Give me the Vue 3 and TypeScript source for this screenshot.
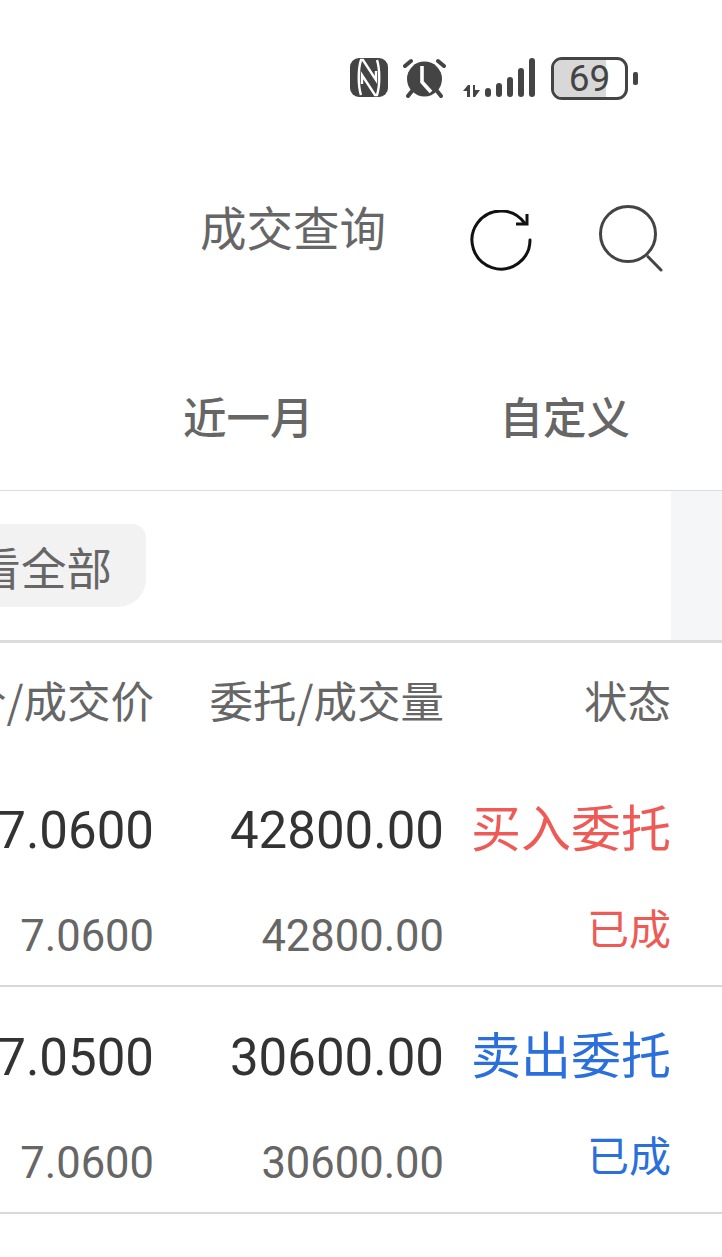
<script setup lang="ts">
interface Trade {
  price: string
  dealPrice: string
  amount: string
  dealAmount: string
  action: string
  state: string
  side: 'buy' | 'sell'
}

const trades: Trade[] = [
  { price: '7.0600', dealPrice: '7.0600', amount: '42800.00', dealAmount: '42800.00', action: '买入委托', state: '已成', side: 'buy' },
  { price: '7.0500', dealPrice: '7.0600', amount: '30600.00', dealAmount: '30600.00', action: '卖出委托', state: '已成', side: 'sell' },
]

const signalBars = [9, 14, 20, 29, 39]
</script>

<template>
  <div class="screen">
    <div class="status-bar">
      <svg class="nfc" width="38" height="39" viewBox="0 0 38 39" fill="none">
        <rect width="38" height="39" rx="9" fill="#444" />
        <path d="M11 37C8 28 8 11 11 2h2l13 20V13M27 2C30 11 30 28 27 37h-2L12 17v9" stroke="#fff" stroke-width="2.4" />
      </svg>
      <svg class="alarm" width="43" height="40" viewBox="0 0 43 40" fill="none">
        <path d="M2 8 8 3M41 8 35 3M9 33l-4 5M34 33l4 5" stroke="#444" stroke-width="4" stroke-linecap="round" />
        <circle cx="21.5" cy="21" r="17.5" fill="#444" />
        <path d="M19 8v16l9 10" stroke="#fff" stroke-width="3.6" />
      </svg>
      <div class="signal">
        <svg class="signal-mark" width="18" height="12" viewBox="0 0 18 12">
          <path d="M0 6 5 0h2v12H4V6zM10 0h2v5h5l-5 7h-2z" fill="#444" />
        </svg>
        <i v-for="h in signalBars" :key="h" :style="{ height: h + 'px' }"></i>
      </div>
      <div class="battery">
        <div class="battery-body">
          <div class="battery-fill"></div>
          <span>69</span>
        </div>
        <div class="battery-cap"></div>
      </div>
    </div>

    <div class="title-row">
      <span class="title">成交查询</span>
      <svg class="refresh" width="64" height="64" viewBox="0 0 64 64" fill="none" stroke="#111" stroke-width="3" stroke-linecap="round">
        <path d="M60 30A29 29 0 1 1 54.5 13" />
        <path d="M46 14h11V4" stroke-linecap="butt" />
      </svg>
      <svg class="search" width="66" height="68" viewBox="0 0 66 68" fill="none" stroke="#444" stroke-width="3" stroke-linecap="round">
        <circle cx="30" cy="30" r="27.5" />
        <path d="M50 52.7 63 66" />
      </svg>
    </div>

    <div class="tabs">
      <span class="tab-month">近一月</span>
      <span class="tab-custom">自定义</span>
    </div>

    <div class="filter-row">
      <div class="chip"><span>查看全部</span></div>
      <div class="side-shade"></div>
    </div>

    <div class="table-head">
      <div class="cell col-price">委托价/成交价</div>
      <div class="cell col-amount">委托/成交量</div>
      <div class="cell col-status">状态</div>
    </div>

    <div v-for="t in trades" :key="t.amount" class="trade">
      <div class="line line-top">
        <div class="cell col-price">{{ t.price }}</div>
        <div class="cell col-amount">{{ t.amount }}</div>
        <div class="cell col-status action" :class="t.side">{{ t.action }}</div>
      </div>
      <div class="line line-bottom">
        <div class="cell col-price">{{ t.dealPrice }}</div>
        <div class="cell col-amount">{{ t.dealAmount }}</div>
        <div class="cell col-status state" :class="t.side">{{ t.state }}</div>
      </div>
    </div>
  </div>
</template>

<style>
html,
body {
  margin: 0;
  background: #fff;
}
</style>

<style scoped>
.screen {
  width: 722px;
  height: 1257px;
  overflow: hidden;
  background: #fff;
  font-family: "Noto Sans CJK SC", "Noto Sans", sans-serif;
  color: #666;
}

.status-bar {
  height: 130px;
  box-sizing: border-box;
  padding: 57px 84px 0 0;
  display: flex;
  justify-content: flex-end;
  align-items: flex-start;
}

.nfc {
  margin: 1px 15px 0 0;
}

.alarm {
  margin: 1px 17px 0 0;
}

.signal {
  height: 40px;
  margin-right: 16px;
  display: flex;
  align-items: flex-end;
  gap: 5px;
}

.signal i {
  width: 6px;
  border-radius: 3px;
  background: #444;
}

.signal-mark {
  margin-right: -1px;
}

.battery {
  display: flex;
  align-items: center;
  gap: 5px;
}

.battery-body {
  position: relative;
  width: 77px;
  height: 43px;
  box-sizing: border-box;
  border: 3px solid #444;
  border-radius: 11px;
  overflow: hidden;
  text-align: center;
}

.battery-fill {
  position: absolute;
  left: 0;
  top: 0;
  bottom: 0;
  width: 73%;
  background: #d8d8d8;
}

.battery-body span {
  position: relative;
  font-family: Roboto, sans-serif;
  font-size: 37px;
  line-height: 38px;
  color: #444;
}

.battery-cap {
  width: 5px;
  height: 13px;
  border-radius: 2px;
  background: #444;
}

.title-row {
  height: 130px;
  display: flex;
  justify-content: flex-end;
  align-items: flex-start;
  padding-right: 58px;
}

.title {
  font-size: 46.5px;
  line-height: 60px;
  margin: 66px 84px 0 0;
  color: #666;
}

.refresh {
  margin: 80px 64px 0 0;
}

.search {
  margin-top: 74px;
}

.tabs {
  height: 231px;
  box-sizing: border-box;
  border-bottom: 1px solid #dcdcdc;
  display: flex;
  padding: 126px 0 0 183px;
  font-size: 43.5px;
  line-height: 60px;
  color: #666;
  font-weight: 500;
}

.tab-month {
  margin-right: 186px;
}

.filter-row {
  height: 149px;
  display: flex;
  justify-content: space-between;
  border-bottom: 3px solid #dcdcdc;
}

.chip {
  width: 146px;
  height: 83px;
  margin-top: 33px;
  display: flex;
  justify-content: flex-end;
  align-items: center;
  padding-right: 34px;
  box-sizing: border-box;
  border-radius: 0 14px 28px 0;
  background: #f2f2f2;
  font-size: 45.5px;
  white-space: nowrap;
  color: #666;
}

.side-shade {
  width: 51px;
  background: #f5f6f8;
}

.table-head {
  height: 117px;
  display: flex;
  padding-top: 27px;
  box-sizing: border-box;
  font-size: 43.5px;
  line-height: 60px;
  color: #666;
}

.cell {
  display: flex;
  justify-content: flex-end;
  white-space: nowrap;
}

.col-price {
  width: 154px;
}

.col-amount {
  width: 290px;
}

.col-status {
  width: 227px;
}

.trade {
  height: 227px;
  box-sizing: border-box;
  border-bottom: 2px solid #d9d9d9;
  font-family: Roboto, "Noto Sans CJK SC", sans-serif;
}

.line {
  display: flex;
}

.line-top {
  height: 147px;
  padding-top: 41px;
  box-sizing: border-box;
  font-size: 51px;
  line-height: 60px;
  color: #333;
}

.line-bottom {
  font-size: 43.5px;
  line-height: 60px;
  color: #666;
}

.action {
  font-family: "Noto Sans CJK SC", sans-serif;
  font-size: 50px;
  margin-top: -6px;
}

.state {
  font-family: "Noto Sans CJK SC", sans-serif;
  font-size: 42px;
  margin-top: -10px;
}

.buy {
  color: #ee5a55;
}

.sell {
  color: #2a6fdb;
}
</style>
